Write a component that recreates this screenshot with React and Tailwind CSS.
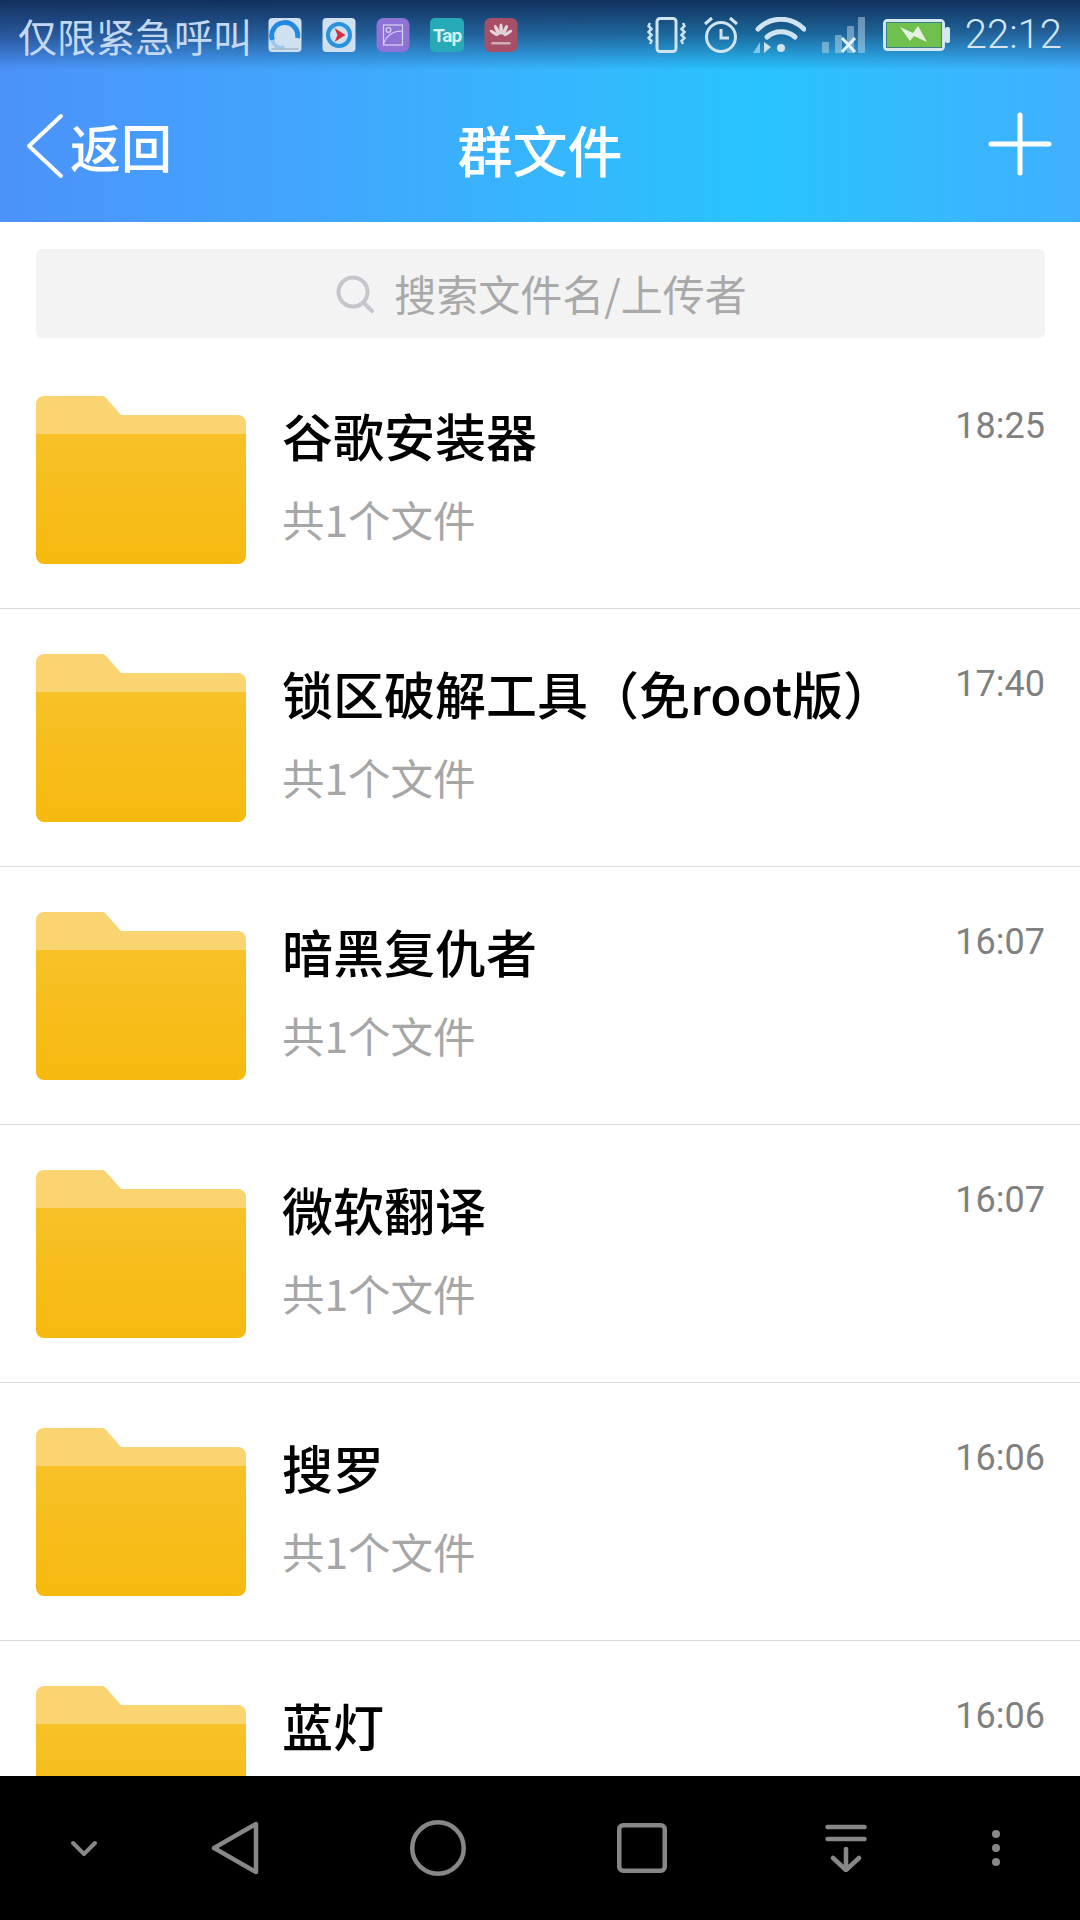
import { useId } from 'react';

const CJK = "font-['Noto_Sans_CJK_SC','Noto_Sans',sans-serif]";

const folders = [
  { name: '谷歌安装器', time: '18:25', count: '共1个文件' },
  { name: '锁区破解工具（免root版）', time: '17:40', count: '共1个文件' },
  { name: '暗黑复仇者', time: '16:07', count: '共1个文件' },
  { name: '微软翻译', time: '16:07', count: '共1个文件' },
  { name: '搜罗', time: '16:06', count: '共1个文件' },
  // the nav bar covers this row's second line
  { name: '蓝灯', time: '16:06' },
];

const FolderIcon = () => {
  const id = useId();
  return (
    <svg width="210" height="168" viewBox="0 0 210 168" className="shrink-0">
      <defs>
        <linearGradient id={id} x1="0" y1="0" x2="0" y2="1">
          <stop offset="0" stopColor="#f8c128" />
          <stop offset="1" stopColor="#f6b90e" />
        </linearGradient>
      </defs>
      <path d="M0 38V8a8 8 0 0 1 8-8h58a6 6 0 0 1 4 2l15 17h117a8 8 0 0 1 8 8v11z" fill="#fad470" />
      <path d="M0 38h210v122a8 8 0 0 1-8 8H8a8 8 0 0 1-8-8z" fill={`url(#${id})`} />
    </svg>
  );
};

const AppIcons = () => (
  <div className="flex items-center gap-[20px] ml-[16px]">
    <svg width="34" height="34" viewBox="0 0 33 34">
      <rect width="33" height="34" rx="4" fill="#cfe0f0" />
      <path d="M4 22A13 13 0 1 1 29 20" fill="none" stroke="#2488e0" strokeWidth="5" />
      <path d="M4 22c1 6 5 8 12 8" fill="none" stroke="#9cc8ee" strokeWidth="4" />
      <path d="M3 31h27" stroke="#a5b8ca" strokeWidth="1.5" />
    </svg>
    <svg width="34" height="34" viewBox="0 0 33 34">
      <rect width="33" height="34" rx="4" fill="#cfe0f0" />
      <circle cx="16.5" cy="17" r="11" fill="none" stroke="#2b93de" strokeWidth="4" />
      <path d="M12 10l11 7-11 7 3-7z" fill="#cf3341" />
    </svg>
    <svg width="34" height="34" viewBox="0 0 33 34">
      <rect width="33" height="34" rx="7" fill="#8e72d6" />
      <rect x="7" y="7" width="19" height="20" fill="none" stroke="#d9d2f2" strokeWidth="1.2" />
      <circle cx="12" cy="12" r="2.4" fill="none" stroke="#d9d2f2" strokeWidth="1.2" />
      <path d="M7 26c3-9 9-13 19-13" fill="none" stroke="#d9d2f2" strokeWidth="1.2" />
    </svg>
    <div className="w-[34px] h-[34px] rounded-[5px] bg-[#27aab8] flex items-center justify-center">
      <span className="text-[19px] leading-none font-bold tracking-[-1px] text-[#d5f0f2] font-['Roboto',sans-serif]">Tap</span>
    </div>
    <svg width="34" height="34" viewBox="0 0 33 34">
      <rect width="33" height="34" rx="6" fill="#a64f66" />
      <g fill="#e4d5da">
        <ellipse cx="16.5" cy="11" rx="1.8" ry="5.5" />
        <ellipse cx="12.5" cy="12" rx="1.8" ry="5.5" transform="rotate(-25 12.5 12)" />
        <ellipse cx="20.5" cy="12" rx="1.8" ry="5.5" transform="rotate(25 20.5 12)" />
        <ellipse cx="9.5" cy="15" rx="1.6" ry="5" transform="rotate(-55 9.5 15)" />
        <ellipse cx="23.5" cy="15" rx="1.6" ry="5" transform="rotate(55 23.5 15)" />
      </g>
      <rect x="7" y="24" width="19" height="2.5" fill="#e4d5da" opacity="0.7" />
    </svg>
  </div>
);

const StatusIcons = () => (
  <div className="flex items-center">
    <svg width="39" height="36" viewBox="0 0 39 36" fill="none" stroke="#cfe3f1">
      <rect x="10" y="1.5" width="19" height="33" rx="3" strokeWidth="3" />
      <path d="M3 6l-1.500 3 3 3-3 3 3 3-3 3 3 3-1.500 3M36 6l1.500 3-3 3 3 3-3 3 3 3-3 3 1.500 3" strokeWidth="2.500" />
    </svg>
    <svg width="36" height="38" viewBox="0 0 36 38" fill="none" stroke="#cfe3f1" className="ml-[17px]">
      <circle cx="18" cy="21" r="14.500" strokeWidth="3" />
      <path d="M18 13v9h8" strokeWidth="3" />
      <path d="M2 8l7-6M34 8l-7-6" strokeWidth="3" />
    </svg>
    <svg width="54" height="36" viewBox="0 0 54 36" className="ml-[13px]">
      <g fill="none" stroke="#cfe3f1" strokeLinecap="round">
        <path d="M6 12c13-13 33-13 46 0" strokeWidth="5" />
        <path d="M15 20c8-7 20-7 28 0" strokeWidth="5" />
      </g>
      <circle cx="29" cy="31" r="4" fill="#cfe3f1" />
      <path d="M8 36v-11l-7 11z" fill="#7fc6ec" />
      <path d="M12 25v11l7-6z" fill="#cfe3f1" />
    </svg>
    <svg width="43" height="36" viewBox="0 0 43 36" className="ml-[16px]">
      <g fill="#cfe3f1" opacity="0.45">
        <rect x="0" y="25" width="7" height="11" rx="1" />
        <rect x="13" y="18" width="7" height="18" rx="1" />
        <rect x="25" y="9" width="7" height="27" rx="1" />
        <rect x="36" y="0" width="7" height="36" rx="1" />
      </g>
      <path d="M20 21l13 14M33 21L20 35" stroke="#e6f3fa" strokeWidth="3" />
    </svg>
    <svg width="67" height="32" viewBox="0 0 67 32" className="ml-[18px]">
      <rect x="1.500" y="1.500" width="59" height="29" rx="3" fill="#6fc04c" stroke="#d4e8f2" strokeWidth="3" />
      <rect x="3.500" y="3.500" width="55" height="25" fill="none" stroke="#3c7f8e" strokeWidth="1" />
      <rect x="62" y="8" width="5" height="16" rx="2" fill="#d4e8f2" />
      <path d="M17 8l13 6 5-7 9 16-13-6-4 5z" fill="#e4f2e0" />
    </svg>
    <span className="ml-[15px] text-[40px] leading-none font-light text-[#d3e5f2] font-['Roboto',sans-serif]">22:12</span>
  </div>
);

const Header = () => (
  <header className="shrink-0 h-[222px] bg-gradient-to-r from-[#4b92fa] via-[#27c3ff] via-70% to-[#3fb0ff]">
    <div className="h-[70px] pl-[18px] pr-[18px] bg-gradient-to-b from-[#12305c] via-[#12305c99] to-transparent flex items-center justify-between">
      <div className="flex items-center">
        <span className={`text-[39px] leading-none text-[#c3d9f3] ${CJK}`}>仅限紧急呼叫</span>
        <AppIcons />
      </div>
      <StatusIcons />
    </div>
    <div className="relative h-[152px] flex items-center justify-between pl-[26px] pr-[28px] text-white">
      <div className="flex items-center">
        <svg width="38" height="66" viewBox="0 0 38 66" fill="none" stroke="white" strokeWidth="4" strokeLinecap="round" strokeLinejoin="round">
          <path d="M35 3L3 33l32 30" />
        </svg>
        <span className={`ml-[6px] text-[51px] leading-none font-medium ${CJK}`}>返回</span>
      </div>
      <h1 className={`absolute left-0 right-0 text-center text-[55px] leading-none font-medium pt-[4px] ${CJK}`}>群文件</h1>
      <svg width="64" height="64" viewBox="0 0 64 64" stroke="white" strokeWidth="5" strokeLinecap="round" className="mb-[4px]">
        <path d="M32 3v58M3 32h58" />
      </svg>
    </div>
  </header>
);

const SearchBar = () => (
  <div className="pt-[27px] pb-[13px] pl-[36px] pr-[35px]">
    <div className="h-[89px] rounded-[6px] bg-[#f3f3f4] flex items-center justify-center">
      <svg width="38" height="38" viewBox="0 0 38 38" fill="none" stroke="#c4c6cc" strokeWidth="4" strokeLinecap="round" className="ml-[2px]">
        <circle cx="17" cy="17" r="14.500" />
        <path d="M28 28l8 8" />
      </svg>
      <span className={`ml-[20px] pb-[2px] text-[42px] leading-none text-[#a9a9a9] ${CJK}`}>搜索文件名/上传者</span>
    </div>
  </div>
);

const FolderRow = ({ name, time, count }) => (
  <div className="shrink-0 h-[258px] border-b border-[#dcdcdc] pl-[36px] pr-[35px] flex items-center">
    <FolderIcon />
    <div className="ml-[36px] flex-1 self-start pt-[47px]">
      <div className={`text-[51px] leading-[74px] font-medium text-black whitespace-nowrap ${CJK}`}>{name}</div>
      {count && <div className={`mt-[22px] text-[42.5px] leading-[50px] text-[#a6a6a6] ${CJK}`}>{count}</div>}
    </div>
    <span className="self-start mt-[54px] text-[36px] leading-[42px] text-[#808080] font-['Roboto',sans-serif]">{time}</span>
  </div>
);

const NavBar = () => (
  <nav className="shrink-0 h-[144px] bg-black flex items-center pl-[70px]">
    <svg width="28" height="18" viewBox="0 0 28 18" fill="none" stroke="#878787" strokeWidth="4" strokeLinecap="round" strokeLinejoin="round" className="mt-[1px]">
      <path d="M3 3l11 11L25 3" />
    </svg>
    <svg width="48" height="54" viewBox="0 0 48 54" fill="none" stroke="#878787" strokeWidth="4.500" strokeLinejoin="round" className="ml-[113px]">
      <path d="M45 3v48L3 27z" />
    </svg>
    <svg width="56" height="56" viewBox="0 0 56 56" fill="none" stroke="#878787" strokeWidth="4.500" className="ml-[151px]">
      <circle cx="28" cy="28" r="25.750" />
    </svg>
    <svg width="50" height="50" viewBox="0 0 50 50" fill="none" stroke="#878787" strokeWidth="4.500" className="ml-[151px]">
      <rect x="2.250" y="2.250" width="45.500" height="45.500" rx="4" />
    </svg>
    <svg width="42" height="48" viewBox="0 0 42 48" fill="none" stroke="#878787" strokeWidth="4.500" strokeLinecap="round" strokeLinejoin="round" className="ml-[158px]">
      <path d="M2.500 3h37M2.500 15h37" />
      <path d="M21 25v21M8 34l13 12 13-12" />
    </svg>
    <div className="ml-[125px] flex flex-col gap-[6px]">
      <span className="block w-[8px] h-[8px] rounded-full bg-[#878787]" />
      <span className="block w-[8px] h-[8px] rounded-full bg-[#878787]" />
      <span className="block w-[8px] h-[8px] rounded-full bg-[#878787]" />
    </div>
  </nav>
);

export default function App() {
  return (
    <div className="w-[1080px] h-[1920px] flex flex-col overflow-hidden bg-white">
      <Header />
      <main className="flex-1 min-h-0 overflow-hidden flex flex-col">
        <SearchBar />
        {folders.map((f) => (
          <FolderRow key={f.name} name={f.name} time={f.time} count={f.count} />
        ))}
      </main>
      <NavBar />
    </div>
  );
}
